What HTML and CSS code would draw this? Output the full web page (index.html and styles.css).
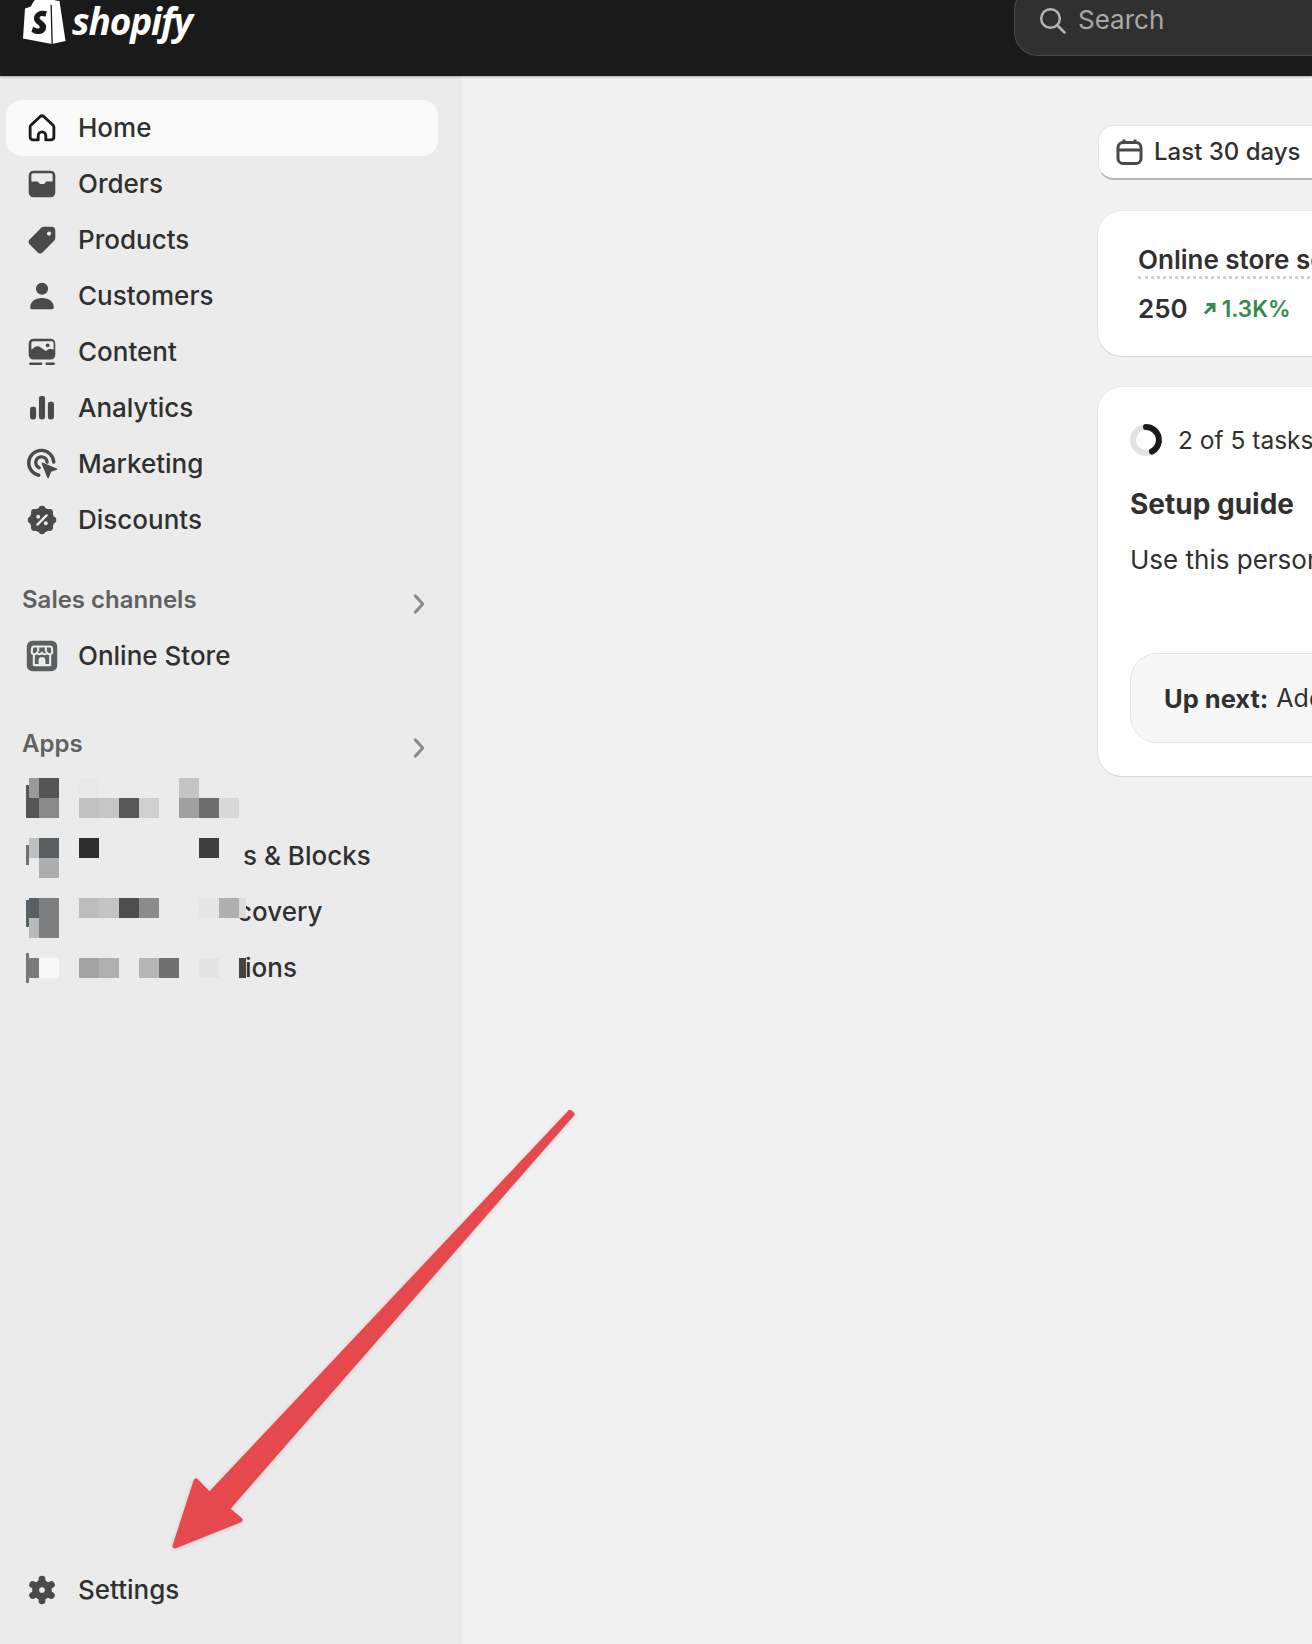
FILE: index.html
```html
<!DOCTYPE html>
<html lang="en">
<head>
<meta charset="utf-8">
<title>Shopify admin</title>
<link rel="stylesheet" href="styles.css">
</head>
<body>
<div class="app">
  <header class="topbar">
    <div class="brand">
      <svg class="bag" width="46" height="50" viewBox="0 0 46 50">
        <path fill="#fff" d="M4 11.500 10 9.500C12 4 16 0 20 0h9.500l5 3.500 4 .5L44.500 44 31 47 2 41.500z"/>
        <path fill="none" stroke="#fff" stroke-width="1.200" d="M14 9C15 3 18-1 22-3M19 8C20 2 24-2 27-3"/>
        <path fill="#1a1a1a" d="M29.500 8 30.500 47.500 31.800 47.200 30.800 7.700z"/>
        <path fill="#1a1a1a" d="M26 14.300 24.300 19.800C22.800 19 20.800 18.700 19.400 19.500 17.600 20.700 19.100 22.500 21.300 24 24.300 26.200 25.600 28.500 25.100 31.300 24.200 36.300 18.800 38.300 13.400 36.400 11.800 35.800 10.500 34.800 10.500 34.800L12.200 29.500C13.300 30.300 15 31.500 16.900 31.600 18.200 31.700 18.900 30.900 18.800 30.100 18.600 28.900 17.200 27.900 15.800 26.800 13.500 25 12.500 22.800 13.100 20 14.200 15 19.500 12.300 26 14.300z"/>
      </svg>
      <span class="wordmark">shopify</span>
    </div>
    <div class="search">
      <svg class="search-icon" width="30" height="30" viewBox="0 0 30 30"><circle cx="13.500" cy="13.500" r="9.300" fill="none" stroke="#b5b5b5" stroke-width="2.500"/><path d="m20.500 20.500 7 7" stroke="#b5b5b5" stroke-width="2.500" stroke-linecap="round"/></svg>
      <span>Search</span>
    </div>
  </header>
  <div class="layout">
    <nav class="sidebar">
      <ul class="nav">
        <li class="item active">
          <svg class="ico" viewBox="0 0 20 20"><path fill="none" stroke="#1a1a1a" stroke-width="1.500" stroke-linejoin="round" d="M8 16.250H5.250a1.500 1.500 0 0 1-1.500-1.500V9.600a1.600 1.600 0 0 1 .5-1.150l4.700-4.400a1.600 1.600 0 0 1 2.100 0l4.700 4.400a1.600 1.600 0 0 1 .5 1.150v5.150a1.500 1.500 0 0 1-1.500 1.500H12V14a2 2 0 0 0-4 0z"/></svg>
          <span>Home</span>
        </li>
        <li class="item">
          <svg class="ico" viewBox="0 0 20 20"><path fill="#4a4a4a" fill-rule="evenodd" d="M5.500 3h9A2.500 2.500 0 0 1 17 5.500v9a2.500 2.500 0 0 1-2.500 2.500h-9A2.500 2.500 0 0 1 3 14.500v-9A2.500 2.500 0 0 1 5.500 3zm-.2 1.400a.9.900 0 0 0-.9.900v3.400h3.200a.5.500 0 0 1 .4.200l.9 1.100h2.200l.9-1.100a.5.500 0 0 1 .4-.2h3.200V5.300a.9.900 0 0 0-.9-.9z"/></svg>
          <span>Orders</span>
        </li>
        <li class="item">
          <svg class="ico" viewBox="0 0 20 20"><path fill="#4a4a4a" fill-rule="evenodd" d="M11 3h4a2 2 0 0 1 2 2v4a2 2 0 0 1-.6 1.400l-6 6a2 2 0 0 1-2.800 0l-4-4a2 2 0 0 1 0-2.800l6-6A2 2 0 0 1 11 3zm2.700 2.500a1.100 1.100 0 1 0 0 2.200 1.100 1.100 0 0 0 0-2.200z"/></svg>
          <span>Products</span>
        </li>
        <li class="item">
          <svg class="ico" viewBox="0 0 20 20"><circle cx="10" cy="6.200" r="3.200" fill="#4a4a4a"/><path fill="#4a4a4a" d="M3.800 16c0-3 2.500-5 6.200-5s6.200 2 6.200 5a1 1 0 0 1-1 1H4.800a1 1 0 0 1-1-1z"/></svg>
          <span>Customers</span>
        </li>
        <li class="item">
          <svg class="ico" viewBox="0 0 20 20"><path fill="#4a4a4a" fill-rule="evenodd" d="M5.500 3h9A2.500 2.500 0 0 1 17 5.500v6a2.500 2.500 0 0 1-2.500 2.500h-9A2.500 2.500 0 0 1 3 11.500v-6A2.500 2.500 0 0 1 5.500 3zm-.2 1.300a.9.900 0 0 0-.9.900v3.600l2.100-1.500c1-.6 2-.3 3 .4l2.500 1.800 1.400-.9c.8-.5 1.500-.4 2.200 0l.5.300V5.200a.9.900 0 0 0-.9-.9z"/><circle cx="13" cy="6.500" r="1" fill="#4a4a4a"/><rect x="3.200" y="15.500" width="7" height="1.300" rx=".6" fill="#4a4a4a"/><rect x="11.800" y="15.500" width="5" height="1.300" rx=".6" fill="#4a4a4a"/></svg>
          <span>Content</span>
        </li>
        <li class="item">
          <svg class="ico" viewBox="0 0 20 20"><rect x="3.700" y="9.300" width="3.200" height="6.700" rx="1.200" fill="#4a4a4a"/><rect x="8.400" y="3.700" width="3.200" height="12.300" rx="1.200" fill="#4a4a4a"/><rect x="13.100" y="6.700" width="3.200" height="9.300" rx="1.200" fill="#4a4a4a"/></svg>
          <span>Analytics</span>
        </li>
        <li class="item">
          <svg class="ico" viewBox="0 0 20 20"><path fill="none" stroke="#4a4a4a" stroke-width="1.800" stroke-linecap="round" d="M8.300 15.900A6.600 6.600 0 1 1 16.200 9"/><path fill="none" stroke="#4a4a4a" stroke-width="1.800" stroke-linecap="round" d="M8.500 12A3 3 0 1 1 12.700 9"/><path fill="#4a4a4a" d="M9.800 9.700a.5.500 0 0 1 .7-.4l7 2.900a.5.500 0 0 1 0 1l-2.700.9-1.100 2.900a.5.500 0 0 1-1 0z"/></svg>
          <span>Marketing</span>
        </li>
        <li class="item">
          <svg class="ico" viewBox="0 0 20 20"><g fill="#4a4a4a"><circle cx="10" cy="10" r="6.500"/><circle cx="10" cy="4.300" r="1.800"/><circle cx="10" cy="15.700" r="1.800"/><circle cx="4.300" cy="10" r="1.800"/><circle cx="15.700" cy="10" r="1.800"/><circle cx="6" cy="6" r="1.800"/><circle cx="14" cy="6" r="1.800"/><circle cx="6" cy="14" r="1.800"/><circle cx="14" cy="14" r="1.800"/></g><path d="m7.600 12.400 4.800-4.800" stroke="#ebebeb" stroke-width="1.300" stroke-linecap="round"/><circle cx="8" cy="8.300" r="1" fill="#ebebeb"/><circle cx="12" cy="11.700" r="1" fill="#ebebeb"/></svg>
          <span>Discounts</span>
        </li>
      </ul>

      <div class="section-head sales"><span>Sales channels</span><svg class="chev" viewBox="0 0 20 20"><path d="m7.500 4.500 5 5.500-5 5.500" fill="none" stroke="#8a8a8a" stroke-width="2" stroke-linecap="round" stroke-linejoin="round"/></svg></div>
      <ul class="nav">
        <li class="item">
          <svg class="ico" viewBox="0 0 20 20"><rect x="2" y="2" width="16" height="16" rx="3" fill="#5c5f62"/><path fill="none" stroke="#ebebeb" stroke-width="1.100" stroke-linejoin="round" d="M5.700 5h8.600a.9.900 0 0 1 .9.900l.2 1.900c0 1.600-2.200 1.600-2.700.4-.5 1.200-2.200 1.200-2.700 0-.5 1.200-2.200 1.200-2.700 0-.5 1.200-2.700 1.200-2.700-.4l.2-1.900a.9.900 0 0 1 .9-.9zM5.700 9.500v5.300h8.600V9.500M8 5v2.800M12 5v2.800"/><path fill="#ebebeb" d="M8.200 14.800v-2.500a1.800 1.800 0 0 1 3.600 0v2.500z"/></svg>
          <span>Online Store</span>
        </li>
      </ul>

      <div class="section-head apps"><span>Apps</span><svg class="chev" viewBox="0 0 20 20"><path d="m7.500 4.500 5 5.500-5 5.500" fill="none" stroke="#8a8a8a" stroke-width="2" stroke-linecap="round" stroke-linejoin="round"/></svg></div>
      <ul class="nav app-list">
        <li class="item app-row">
          <svg class="mosaic" width="250" height="60" viewBox="26 778 250 60" shape-rendering="crispEdges">
            <rect x="26" y="785" width="3" height="33" fill="#555"/><rect x="29" y="778" width="10" height="20" fill="#999"/><rect x="39" y="778" width="20" height="20" fill="#555"/><rect x="29" y="798" width="10" height="20" fill="#555"/><rect x="39" y="798" width="20" height="20" fill="#8a8a8a"/>
            <rect x="79" y="778" width="20" height="20" fill="#e8e8e8"/><rect x="79" y="798" width="20" height="20" fill="#c0c0c0"/><rect x="99" y="798" width="20" height="20" fill="#c6c6c6"/><rect x="119" y="798" width="20" height="20" fill="#585858"/><rect x="139" y="798" width="20" height="20" fill="#cfcfcf"/>
            <rect x="179" y="778" width="20" height="20" fill="#c4c4c4"/><rect x="179" y="798" width="20" height="20" fill="#a0a0a0"/><rect x="199" y="798" width="20" height="20" fill="#6e6e6e"/><rect x="219" y="798" width="20" height="20" fill="#d8d8d8"/>
          </svg>
        </li>
        <li class="item app-row">
          <svg class="mosaic" width="250" height="60" viewBox="26 834 250 60" shape-rendering="crispEdges">
            <rect x="26" y="845" width="3" height="20" fill="#6e7072"/><rect x="29" y="838" width="10" height="20" fill="#bfc0c0"/><rect x="39" y="838" width="20" height="20" fill="#5a5e60"/><rect x="39" y="858" width="20" height="20" fill="#acadae"/>
            <rect x="79" y="838" width="20" height="20" fill="#2e2e2e"/><rect x="199" y="838" width="20" height="20" fill="#404040"/>
          </svg>
          <span class="app-text">s &amp; Blocks</span>
        </li>
        <li class="item app-row">
          <svg class="mosaic" width="250" height="60" viewBox="26 890 250 60" shape-rendering="crispEdges">
            <rect x="26" y="900" width="3" height="27" fill="#5a5f63"/><rect x="29" y="898" width="10" height="20" fill="#5a5f63"/><rect x="39" y="898" width="20" height="40" fill="#7e7f80"/><rect x="29" y="918" width="10" height="20" fill="#b8b9b9"/>
            <rect x="79" y="898" width="20" height="20" fill="#bdbdbd"/><rect x="99" y="898" width="20" height="20" fill="#c4c4c4"/><rect x="119" y="898" width="20" height="20" fill="#4e4e4e"/><rect x="139" y="898" width="20" height="20" fill="#8c8c8c"/>
            <rect x="199" y="898" width="20" height="20" fill="#e6e6e6"/><rect x="219" y="898" width="20" height="20" fill="#afafaf"/><rect x="239" y="898" width="7" height="20" fill="#dcdcdc"/>
          </svg>
          <span class="app-text app-text-b">covery</span>
        </li>
        <li class="item app-row">
          <svg class="mosaic" width="250" height="60" viewBox="26 946 250 60" shape-rendering="crispEdges">
            <rect x="26" y="953" width="3" height="30" fill="#777"/><rect x="29" y="958" width="10" height="20" fill="#7a7a7a"/><rect x="39" y="958" width="20" height="20" fill="#f8f8f8"/>
            <rect x="79" y="958" width="20" height="20" fill="#a4a4a4"/><rect x="99" y="958" width="20" height="20" fill="#b0b0b0"/><rect x="139" y="958" width="20" height="20" fill="#b6b6b6"/><rect x="159" y="958" width="20" height="20" fill="#707070"/><rect x="199" y="958" width="20" height="20" fill="#e4e4e4"/><rect x="239" y="958" width="7" height="20" fill="#444"/>
          </svg>
          <span class="app-text app-text-c">ions</span>
        </li>
      </ul>

      <ul class="nav settings">
        <li class="item">
          <svg class="ico" viewBox="0 0 20 20"><g stroke="#4a4a4a" stroke-width="3.600" stroke-linecap="round"><path d="M10 4.300v11.400M5.060 7.150l9.880 5.700M5.060 12.850l9.880-5.700"/></g><circle cx="10" cy="10" r="5.200" fill="#4a4a4a"/><circle cx="10" cy="10" r="1.500" fill="#ebebeb"/></svg>
          <span>Settings</span>
        </li>
      </ul>
    </nav>

    <main class="main">
      <button class="date-btn" type="button">
        <svg class="cal" width="28" height="28" viewBox="0 0 28 28"><rect x="2" y="4.500" width="23" height="21" rx="5" fill="none" stroke="#4a4a4a" stroke-width="3"/><path d="M2 12h23M8 1.500v3M19 1.500v3" stroke="#4a4a4a" stroke-width="3"/></svg>
        <span class="date-label">Last 30 days</span>
      </button>

      <section class="card stat">
        <div class="stat-title">Online store sessions</div>
        <div class="stat-line">
          <span class="stat-num">250</span>
          <span class="stat-delta">
            <svg width="14" height="14" viewBox="0 0 14 14"><path d="M3 11.500 11 3.500M4.500 2.500h7.500V10" fill="none" stroke="#338a50" stroke-width="3"/></svg>
            1.3K%
          </span>
        </div>
      </section>

      <section class="card guide">
        <div class="progress">
          <svg class="ring" width="34" height="34" viewBox="0 0 34 34"><circle cx="17" cy="17" r="13" fill="none" stroke="#e3e3e3" stroke-width="6"/><path d="M17 4a13 13 0 0 1 6 24.500" fill="none" stroke="#1a1a1a" stroke-width="6" stroke-linecap="round"/></svg>
          <span>2 of 5 tasks completed</span>
        </div>
        <h2 class="guide-title">Setup guide</h2>
        <p class="guide-text">Use this personalized guide to get your store up and running.</p>
        <div class="upnext"><b>Up next:</b> <span>Add your first product</span></div>
      </section>
    </main>
  </div>

  <svg class="arrow" width="620" height="470" viewBox="160 1100 620 470">
    <path fill="#e5494e" stroke="#e5494e" stroke-width="5" stroke-linejoin="round" d="M175 1546 196 1481 209.500 1495 570 1112.500 572 1114 227 1509 240 1520z"/>
  </svg>
</div>
</body>
</html>
```
FILE: styles.css
```css
* { box-sizing: border-box; }
html, body { margin: 0; padding: 0; height: 100%; overflow: hidden; }
body { font-family: Inter, "Liberation Sans", sans-serif; color: #303030; background: #f1f1f1; }
ul { list-style: none; margin: 0; padding: 0; }

.app { position: relative; width: 1312px; height: 1644px; overflow: hidden; display: flex; flex-direction: column; }

.topbar { height: 76px; flex: none; background: #1a1a1a; display: flex; align-items: flex-end; justify-content: space-between; padding: 0 0 20px 21px; box-shadow: 0 1px 2px rgba(0,0,0,.3); position: relative; z-index: 2; }
.brand { display: flex; align-items: flex-start; height: 0; position: relative; top: -35px; gap: 5px; }
.bag { flex: none; margin-top: -24px; }
.wordmark { font-family: "Open Sans", sans-serif; font-style: italic; font-weight: 700; color: #fff; font-size: 37px; line-height: 40px; margin-top: -20px; letter-spacing: -1.100px; }
.search { width: 298px; height: 70px; background: #303030; border: 1px solid #4a4a4a; border-right: 0; border-radius: 24px 0 0 24px; display: flex; align-items: flex-end; padding: 0 0 20px 22px; gap: 11px; color: #a8a8a8; font-size: 26px; line-height: 30px; flex: none; }

.layout { flex: 1; display: flex; min-height: 0; }
.sidebar { width: 462px; flex: none; background: #ebebeb; padding: 24px 0 26px; display: flex; flex-direction: column; }
.item { height: 56px; margin: 0 24px 0 6px; padding-left: 17px; display: flex; align-items: center; gap: 17px; font-size: 26px; font-weight: 500; color: #303030; border-radius: 16px; position: relative; white-space: nowrap; }
.item span { margin-bottom: 2px; }
.item.active { background: #fafafa; }
.ico { width: 38px; height: 38px; flex: none; }

.section-head { display: flex; align-items: center; justify-content: space-between; padding: 0 28px 2px 22px; height: 56px; font-size: 24px; font-weight: 600; color: #616161; }
.section-head.sales { margin-top: 24px; }
.section-head.apps { margin-top: 32px; }
.chev { width: 30px; height: 30px; flex: none; position: relative; top: 5px; }

.app-row { padding-left: 0; margin-left: 0; }
.mosaic { position: absolute; left: 26px; top: 6px; overflow: visible; z-index: 1; }
.app-text { margin-left: 243px; }
.app-text-b { margin-left: 237px; }
.app-text-c { margin-left: 245px; }
.settings { margin-top: auto; }

.main { flex: 1; min-width: 0; padding: 49px 0 0 636px; overflow: hidden; }
.date-btn { display: flex; align-items: center; gap: 10px; width: 260px; height: 55px; margin: 0 0 31px 0; padding: 0 0 0 17px; font: 500 24px Inter, sans-serif; color: #303030; background: #fff; border: 1px solid #e3e3e3; border-bottom: 2px solid #b5b5b5; border-right: 0; border-radius: 16px 0 0 16px; white-space: nowrap; }
.date-label { margin-bottom: 2px; }
.cal { flex: none; }
.card { background: #fff; border-radius: 24px 0 0 24px; box-shadow: 0 1px 0 #d4d4d4, 0 0 0 1px #e6e6e6; white-space: nowrap; overflow: hidden; }
.stat { height: 145px; padding: 33px 0 0 40px; margin-bottom: 31px; width: 214px; }
.stat-title { display: inline-block; font-size: 26px; font-weight: 600; line-height: 32px; border-bottom: 3px dotted #cfcfcf; }
.stat-line { display: flex; align-items: center; gap: 14px; margin-top: 14px; line-height: 32px; }
.stat-num { font-size: 26px; font-weight: 600; }
.stat-delta { color: #338a50; font-size: 22.500px; font-weight: 600; display: flex; align-items: center; gap: 6px; }
.guide { height: 389px; width: 214px; padding: 36px 0 0 31px; }
.progress { display: flex; align-items: center; gap: 15px; font-size: 24.500px; height: 34px; }
.ring { flex: none; }
.guide-title { margin: 30px 0 0 1px; font-size: 28px; line-height: 34px; font-weight: 650; }
.guide-text { margin: 23px 0 0 1px; font-size: 26px; line-height: 32px; }
.upnext { margin: 77px 0 0 1px; height: 90px; width: 300px; padding-left: 33px; display: flex; align-items: center; gap: 8px; font-size: 25px; background: #f7f7f7; border: 1px solid #e3e3e3; border-radius: 27px 0 0 27px; }
.upnext b { font-size: 25.500px; font-weight: 650; }

.arrow { position: absolute; left: 160px; top: 1100px; z-index: 3; filter: drop-shadow(0 1px 2px rgba(0,0,0,.15)); }
```
